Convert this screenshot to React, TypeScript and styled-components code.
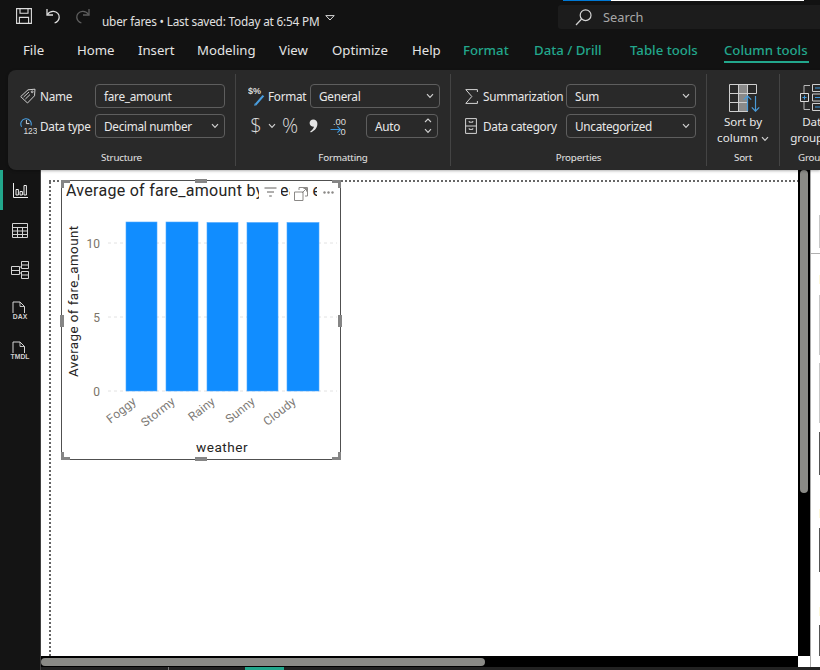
import React from "react";
import styled, { createGlobalStyle } from "styled-components";

const Global = createGlobalStyle`
  html, body { margin: 0; padding: 0; background: #121212; }
  * { box-sizing: border-box; }
  #root { width: 820px; height: 670px; overflow: hidden; }
`;

const UI = `"Noto Sans", "Open Sans", sans-serif`;
const CHART = `"Roboto", "Liberation Sans", sans-serif`;

const Page = styled.div`
  width: 820px; height: 670px; display: flex; flex-direction: column;
  background: #121212; color: #e8e8e8; font-family: ${UI}; overflow: hidden;
`;
const TitleBar = styled.div`height: 35px; display: flex; align-items: flex-start; flex: none;`;
const QuickIcons = styled.div`display: flex; align-items: center; gap: 14px; padding: 8px 0 0 16px; width: 102px;`;
const Mirror = styled.span`transform: scaleX(-1); display: flex;`;
const DocTitle = styled.div`font-size: 11.8px; letter-spacing: -.2px; color: #e0e0e0; margin-top: 12px; white-space: nowrap; line-height: 18px;`;
const TitleCaret = styled.svg`margin: 15px 0 0 6px;`;
const SearchColumn = styled.div`margin-left: auto; width: 262px; display: flex; flex-direction: column;`;
const Progress = styled.div`height: 1px; margin: 0 16px 0 5px; display: flex; background: #fff;`;
const ProgressFill = styled.div`height: 1px; background: #0078d4;`;
const SearchBox = styled.div`
  margin-top: 4px; height: 24px; background: #1c1c1c; border-radius: 3px 0 0 3px;
  display: flex; align-items: center; padding-left: 17px; gap: 11px; color: #a8a8a8; font-size: 12.8px;
`;

const TabBar = styled.div`height: 35px; display: flex; flex: none; padding-left: 23px; font-size: 13.2px;`;
const Tab = styled.div<{ $w: number; $ctx?: boolean; $active?: boolean }>`
  width: ${p => p.$w}px; flex: none; height: 28px; line-height: 30px; white-space: nowrap;
  color: ${p => (p.$ctx ? "#22a78c" : "#e4e4e4")};
  font-weight: ${p => (p.$ctx ? 500 : 400)};
  position: relative;
  ${p => p.$active ? `&::after { content: ""; position: absolute; left: 0; bottom: 0; width: 85px; height: 2px; background: #22a78c; }` : ""}
`;

const Ribbon = styled.div`
  height: 100px; margin-left: 8px; flex: none; background: #292929; border-radius: 8px 0 0 8px;
  display: flex; overflow: hidden; box-shadow: 0 1px 3px rgba(0,0,0,.3); position: relative; z-index: 2;
`;
const Section = styled.div<{ $w: number; $last?: boolean }>`
  width: ${p => p.$w}px; flex: none; margin: 4px 0; padding: 10px 0 1px; 
  border-right: ${p => (p.$last ? "none" : "1px solid #444")};
  display: flex; flex-direction: column; justify-content: space-between;
`;
const SectionBody = styled.div<{ $pad: number }>`padding-left: ${p => p.$pad}px; display: flex; flex-direction: column; gap: 6px;`;
const SectionLabel = styled.div<{ $clip?: boolean }>`
  text-align: ${p => (p.$clip ? "left" : "center")}; padding-left: ${p => (p.$clip ? "18px" : "0")};
  font-size: 9.8px; letter-spacing: -.2px; line-height: 14px; color: #e4e4e4; white-space: nowrap;
`;
const Row = styled.div`display: flex; align-items: center; height: 24px;`;
const FieldIcon = styled.div<{ $w: number }>`width: ${p => p.$w}px; flex: none; display: flex; align-items: center;`;
const FieldLabel = styled.div<{ $w: number }>`width: ${p => p.$w}px; flex: none; font-size: 11.8px; letter-spacing: -.3px; color: #e8e8e8; white-space: nowrap;`;
const Field = styled.div<{ $w?: number }>`
  width: ${p => p.$w ?? 130}px; height: 24px; flex: none; border: 1px solid #5e5e5e; border-radius: 4px;
  font-size: 11.8px; letter-spacing: -.3px; color: #e8e8e8; padding: 0 5px 0 8px; display: flex; align-items: center; justify-content: space-between; white-space: nowrap;
`;
const FormatTools = styled.div`width: 118px; flex: none; height: 24px; display: flex; align-items: center;`;
const Glyph = styled.span<{ $w: number; $ml: number }>`
  width: ${p => p.$w}px; margin-left: ${p => p.$ml}px; text-align: center; flex: none; font-family: "Open Sans", sans-serif;
  font-weight: 300; font-size: 20px; line-height: 24px; color: #dcdcdc;
`;
const ToolSvg = styled.svg<{ $ml: number }>`margin-left: ${p => p.$ml}px; flex: none;`;
const Spin = styled.div`display: flex; flex-direction: column; gap: 5px;`;
const LargeSlot = styled.div<{ $w: number }>`display: flex; flex-direction: column; align-items: center; width: ${p => p.$w}px;`;
const LargeIconBox = styled.div<{ $shift: number }>`height: 28px; margin: 0 0 2px ${p => p.$shift}px;`;
const LargeText = styled.div`font-size: 11.6px; line-height: 16px; color: #e8e8e8; text-align: center; white-space: nowrap;`;

const Workspace = styled.div`flex: 1; display: flex; min-height: 0;`;
const Sidebar = styled.div`width: 41px; flex: none; background: #141414; border-right: 1px solid #3f3f3f; display: flex; flex-direction: column;`;
const SideItem = styled.div<{ $active?: boolean }>`
  height: 40px; display: flex; align-items: center; justify-content: center; color: #e4e4e4;
  border-left: 3px solid ${p => (p.$active ? "#22a78c" : "transparent")}; padding-right: 3px;
`;
const MainColumn = styled.div`flex: 1; display: flex; flex-direction: column; min-width: 0;`;
const CanvasRow = styled.div`flex: 1; display: flex; min-height: 0;`;
const Canvas = styled.div`flex: 1; background: #fff; overflow: hidden; padding: 8px 0 0 8px; min-width: 0;`;
const PageFrame = styled.div`
  width: 1000px; height: 700px; padding: 0 0 0 12px;
  background-image:
    repeating-linear-gradient(90deg, #666 0 2px, transparent 2px 4px),
    repeating-linear-gradient(0deg, #666 0 2px, transparent 2px 4px);
  background-size: 100% 2px, 2px 100%;
  background-repeat: no-repeat;
`;
const Visual = styled.div`width: 280px; height: 280px; margin-top: 2px; position: relative; border: 1px solid #505050; background: #fff;`;
const VisualTitle = styled.div`
  position: absolute; left: 4px; top: 0; width: 251px; overflow: hidden; white-space: nowrap;
  font: 400 16px/20px ${CHART}; color: #252423; letter-spacing: .28px;
`;
const HeaderIcon = styled.div<{ $x: number; $w: number; $top?: number }>`
  position: absolute; left: ${p => p.$x}px; top: ${p => p.$top ?? 1}px; width: ${p => p.$w}px; height: 20px; background: #fff;
  display: flex; align-items: center; justify-content: center;
`;
const Handle = styled.div<{ $x: string; $y: string; $w: number; $h: number }>`
  position: absolute; ${p => p.$x}; ${p => p.$y}; width: ${p => p.$w}px; height: ${p => p.$h}px; background: #858585;
`;
const ChartSvg = styled.svg`display: block;`;

const VScroll = styled.div`width: 12px; flex: none; background: #000; padding: 0 2px 0 2px;`;
const VThumb = styled.div`width: 8px; height: 323px; background: #8a8a86; border-radius: 4px;`;
const RightPanel = styled.div`width: 10px; flex: none; background: #fff; border-left: 1px solid #aaa; display: flex; flex-direction: column; align-items: stretch;`;
const RightRule = styled.div`height: 1px; background: #b0b0b0; margin-top: 5px;`;
const RightMark = styled.div<{ $top: number; $h: number; $c: string }>`
  margin-top: ${p => p.$top}px; height: ${p => p.$h}px; width: 1px; align-self: flex-end; background: ${p => p.$c};
`;
const BottomBar = styled.div`height: 11px; flex: none; display: flex;`;
const HTrack = styled.div`flex: 1; background: #000; padding-top: 2px;`;
const HThumb = styled.div`width: 444px; height: 8px; background: #8a8a86; border-radius: 4px;`;
const Corner = styled.div`width: 12px; background: #fff;`;
const CornerGap = styled.div`width: 10px; background: #fff; border-left: 1px solid #aaa;`;
const PageStrip = styled.div`height: 3px; flex: none; background: #222; display: flex;`;
const StripTick = styled.div`width: 1px; margin-left: 127px; background: #777;`;
const StripTab = styled.div`width: 39px; margin-left: 76px; background: #22a78c;`;

const Chev = ({ c = "#cfcfcf" }: { c?: string }) => (
  <svg width="8" height="6" viewBox="0 0 8 6" fill="none"><path d="M1 1.2 4 4.4 7 1.2" stroke={c} strokeWidth="1.2" /></svg>
);

const Save = () => (
  <svg width="16" height="16" viewBox="0 0 16 16" fill="none" stroke="#dedede" strokeWidth="1.1">
    <path d="M.6.6h14.8v14.8H.6z" /><path d="M4 .6v4.6h8V.6M3.4 15.4V9.4h9.2v6" />
  </svg>
);
const Undo = ({ c }: { c: string }) => (
  <svg width="15" height="16" viewBox="0 0 15 16" fill="none" stroke={c} strokeWidth="1.3">
    <path d="M1 1v6h6" /><path d="M1.2 6.6C3 4 5 3.2 7.6 3.4c3.4.3 6 3 5.6 6.2-.3 2.6-2 4.4-4.6 5.4" />
  </svg>
);
const SearchIcon = () => (
  <svg width="17" height="17" viewBox="0 0 17 17" fill="none" stroke="#d4d4d4" strokeWidth="1.2">
    <circle cx="10.6" cy="6.2" r="5.4" /><path d="M6.6 10 1 16" />
  </svg>
);
const TagIcon = () => (
  <svg width="16" height="16" viewBox="0 0 16 16" fill="none" stroke="#cfcfcf" strokeWidth="1">
    <path d="M.7 8.6 8 1.8l7-.6-.5 6.6-7 7.2z" /><path d="M3.6 9 9 4M5.4 11l4.6-4.4" /><circle cx="12.2" cy="3.8" r=".9" />
  </svg>
);
const TypeIcon = () => (
  <svg width="17" height="18" viewBox="0 0 17 18" fill="none">
    <path d="M11 8.5a5.2 5.2 0 1 0-9.4 1.2" stroke="#4a9fe0" strokeWidth="1.1" /><path d="M6.4 3v3.6h3" stroke="#dcdcdc" strokeWidth="1" />
    <text x="3.4" y="17" fontSize="8.4" fill="#dcdcdc" fontFamily="Liberation Sans, sans-serif">123</text>
  </svg>
);
const FormatIcon = () => (
  <svg width="18" height="22" viewBox="0 0 18 22" fill="none">
    <text x="0" y="8.5" fontSize="9" fontWeight="700" fill="#dcdcdc" fontFamily="Liberation Sans, sans-serif">$%</text>
    <path d="M7.6 19.6 15.4 10.6" stroke="#4a9fe0" strokeWidth="2.2" />
    <path d="M6.6 18.4 6.2 20.8l2.4-.5z" fill="#4a9fe0" />
  </svg>
);
const SigmaIcon = () => (
  <svg width="13" height="15" viewBox="0 0 13 15" fill="none" stroke="#d6d6d6" strokeWidth="1"><path d="M12.4 3V.6H.8l6 6.9-6 6.9h11.6V12" /></svg>
);
const CategoryIcon = () => (
  <svg width="12" height="16" viewBox="0 0 12 16" fill="none" stroke="#d6d6d6" strokeWidth="1">
    <path d="M.6.6h10.8v14.8H.6zM.6 8h10.8M4.2 4.2h3.6M4.2 11.4h3.6" /><path d="M4.2 3v1.2M7.8 3v1.2M4.2 10.2v1.2M7.8 10.2v1.2" />
  </svg>
);
const SortIcon = () => (
  <svg width="32" height="28" viewBox="0 0 32 28" fill="none">
    <path d="M9.5.5h9v27h-9z" fill="#8a8a8a" />
    <path d="M.5.5h27v9H.5zM.5 9.5h18v9H.5zM.5 18.5h18v9H.5zM9.5.5v27M18.5.5v27" stroke="#cfcfcf" strokeWidth="1" />
    <path d="M18.5 27V12M14.8 15.6l3.7-3.8 3.7 3.8M26.5 12v15M22.8 23.4l3.7 3.8 3.7-3.8" stroke="#4a9bd8" strokeWidth="1.2" />
  </svg>
);
const GroupIcon = () => (
  <svg width="40" height="27" viewBox="0 0 40 27" fill="none">
    <path d="M10 1.5H4v24h6" stroke="#b8b8b8" strokeWidth="1" />
    <path d="M.5 9.5h8v8h-8z" stroke="#dcdcdc" strokeWidth="1" fill="#292929" />
    <path d="M2.4 13.5h4.2M4.5 11.4v4.2" stroke="#3f9be0" strokeWidth="1" />
    <path d="M12.5.5h20v7h-20zM12.5 10h20v7h-20zM12.5 19.5h20v7h-20z" stroke="#cfcfcf" strokeWidth="1" />
    <path d="M15 4h9M15 13.5h9M15 23h9" stroke="#3f9be0" strokeWidth="1.2" />
  </svg>
);
const ChartIcon = () => (
  <svg width="15" height="15" viewBox="0 0 15 15" fill="none" stroke="#eee" strokeWidth="1">
    <path d="M.5 0v14.5H15" /><path d="M3 6.5h2.4V12H3zM7 8.5h2.4V12H7zM11 2.5h2.4V12H11z" />
  </svg>
);
const TableIcon = () => (
  <svg width="16" height="15" viewBox="0 0 16 15" fill="none" stroke="#d4d4d4" strokeWidth="1">
    <path d="M.5.5h15v14H.5zM.5 4.5h15M.5 8h15M.5 11.5h15M5.5 4.5v10M10.5 4.5v10" />
  </svg>
);
const ModelIcon = () => (
  <svg width="18" height="18" viewBox="0 0 18 18" fill="none" stroke="#d4d4d4" strokeWidth="1">
    <path d="M.5 5.5h8v8h-8zM.5 9.5h8M10.5.5h7v7h-7zM10.5 4h7M10.5 10.5h7v7h-7zM10.5 14h7M8.5 6h2M8.5 12h2" />
  </svg>
);
const DocLabelIcon = ({ label, w }: { label: string; w: number }) => (
  <svg width={w} height="19" viewBox={`0 0 ${w} 19`} fill="none">
    <path d={`M${w / 2 - 7} 12V1h7l4.5 4.5V12`} stroke="#d4d4d4" strokeWidth="1" />
    <path d={`M${w / 2} 1v4.5h4.5`} stroke="#d4d4d4" strokeWidth=".9" />
    <text x={w / 2} y="17.6" textAnchor="middle" fontSize="6.8" fontWeight="700" fill="#cfcfcf" fontFamily="Liberation Sans, sans-serif">{label}</text>
  </svg>
);

const bars = [
  { x: 64, w: 31, top: 41 }, { x: 104, w: 32, top: 41 }, { x: 145, w: 31, top: 41.5 },
  { x: 185, w: 31, top: 41.5 }, { x: 225, w: 32, top: 41.5 },
];
const cats = [["Foggy", 75], ["Stormy", 114], ["Rainy", 154], ["Sunny", 194], ["Cloudy", 235]] as const;

const Chart = () => (
  <ChartSvg width="278" height="278" viewBox="0 0 278 278">
    {[62, 136, 210].map(y => (
      <line key={y} x1="46" x2="275" y1={y} y2={y} stroke="#e2e2e2" strokeDasharray="3 3" />
    ))}
    {bars.map(b => (
      <rect key={b.x} x={b.x} y={b.top} width={b.w} height={210 - b.top} fill="#118dff" stroke="#4fa9ff" strokeWidth=".6" />
    ))}
    {[["10", 67], ["5", 141], ["0", 215]].map(([t, y]) => (
      <text key={t} x="38" y={y} textAnchor="end" fontSize="12" fill="#7b7468" fontFamily={CHART}>{t}</text>
    ))}
    <text transform="translate(16 196) rotate(-90)" fontSize="13.4" letterSpacing=".42" fill="#252423" fontFamily={CHART}>Average of fare_amount</text>
    {cats.map(([c, x]) => (
      <text key={c} transform={`translate(${x} 222) rotate(-38)`} textAnchor="end" fontSize="12" letterSpacing=".2" fill="#7d7a76" fontFamily={CHART}>{c}</text>
    ))}
    <text x="160" y="271" textAnchor="middle" fontSize="13.6" letterSpacing=".5" fill="#252423" fontFamily={CHART}>weather</text>
  </ChartSvg>
);

export default function App() {
  return (
    <Page>
      <Global />
      <TitleBar>
        <QuickIcons>
          <Save />
          <Undo c="#dedede" />
          <Mirror><Undo c="#5f5f5f" /></Mirror>
        </QuickIcons>
        <DocTitle>uber fares • Last saved: Today at 6:54 PM</DocTitle>
        <TitleCaret width="10" height="6" viewBox="0 0 10 6" fill="none"><path d="M.8.6h8.4L5 5z" stroke="#d8d8d8" /></TitleCaret>
        <SearchColumn>
          <Progress><ProgressFill style={{ width: 48 }} /></Progress>
          <SearchBox><SearchIcon />Search</SearchBox>
        </SearchColumn>
      </TitleBar>

      <TabBar>
        <Tab $w={54}>File</Tab>
        <Tab $w={61}>Home</Tab>
        <Tab $w={59}>Insert</Tab>
        <Tab $w={82}>Modeling</Tab>
        <Tab $w={53}>View</Tab>
        <Tab $w={80}>Optimize</Tab>
        <Tab $w={51}>Help</Tab>
        <Tab $w={71} $ctx>Format</Tab>
        <Tab $w={96} $ctx>Data / Drill</Tab>
        <Tab $w={94} $ctx>Table tools</Tab>
        <Tab $w={90} $ctx $active>Column tools</Tab>
      </TabBar>

      <Ribbon>
        <Section $w={228}>
          <SectionBody $pad={12}>
            <Row>
              <FieldIcon $w={20}><TagIcon /></FieldIcon>
              <FieldLabel $w={55}>Name</FieldLabel>
              <Field>fare_amount</Field>
            </Row>
            <Row>
              <FieldIcon $w={20}><TypeIcon /></FieldIcon>
              <FieldLabel $w={55}>Data type</FieldLabel>
              <Field>Decimal number<Chev /></Field>
            </Row>
          </SectionBody>
          <SectionLabel>Structure</SectionLabel>
        </Section>

        <Section $w={215}>
          <SectionBody $pad={12}>
            <Row>
              <FieldIcon $w={20}><FormatIcon /></FieldIcon>
              <FieldLabel $w={42}>Format</FieldLabel>
              <Field>General<Chev /></Field>
            </Row>
            <Row>
              <FormatTools>
                <Glyph $w={12} $ml={2}>$</Glyph>
                <ToolSvg $ml={6} width="8" height="6" viewBox="0 0 8 6" fill="none"><path d="M1 1.2 4 4.4 7 1.2" stroke="#cfcfcf" strokeWidth="1.2" /></ToolSvg>
                <Glyph $w={18} $ml={5}>%</Glyph>
                <ToolSvg $ml={10} width="9" height="14" viewBox="0 0 9 14" fill="#e4e4e4">
                  <path d="M4.2.4C6.8.4 8.4 2.2 8.4 4.8c0 3.8-2.6 7-6.6 8.6l-.6-1c2-1.2 3.4-2.8 3.8-4.6C2.400 7.800.6 6.200.6 4 .6 1.900 2.200.4 4.200.4z" />
                </ToolSvg>
                <ToolSvg $ml={12} width="17" height="19" viewBox="0 0 17 19" fill="none">
                  <text x="3" y="8" fontSize="9.4" fill="#dcdcdc" fontFamily="Liberation Sans, sans-serif">.00</text>
                  <text x="8" y="18" fontSize="9.4" fill="#dcdcdc" fontFamily="Liberation Sans, sans-serif">.0</text>
                  <path d="M.5 12.5h10M7.4 9.4l3.1 3.1-3.1 3.1" stroke="#3a96de" strokeWidth="1.1" />
                </ToolSvg>
              </FormatTools>
              <Field $w={72}>Auto<Spin><svg width="8" height="5" viewBox="0 0 8 5" fill="none"><path d="M1 4 4 1l3 3" stroke="#cfcfcf" strokeWidth="1.1" /></svg><Chev /></Spin></Field>
            </Row>
          </SectionBody>
          <SectionLabel>Formatting</SectionLabel>
        </Section>

        <Section $w={256}>
          <SectionBody $pad={14}>
            <Row>
              <FieldIcon $w={18}><SigmaIcon /></FieldIcon>
              <FieldLabel $w={83}>Summarization</FieldLabel>
              <Field>Sum<Chev /></Field>
            </Row>
            <Row>
              <FieldIcon $w={18}><CategoryIcon /></FieldIcon>
              <FieldLabel $w={83}>Data category</FieldLabel>
              <Field>Uncategorized<Chev /></Field>
            </Row>
          </SectionBody>
          <SectionLabel>Properties</SectionLabel>
        </Section>

        <Section $w={73}>
          <LargeSlot $w={72}>
            <LargeIconBox $shift={4}><SortIcon /></LargeIconBox>
            <LargeText>Sort by</LargeText>
            <LargeText>column <Chev /></LargeText>
          </LargeSlot>
          <SectionLabel>Sort</SectionLabel>
        </Section>

        <Section $w={60} $last>
          <LargeSlot $w={70}>
            <LargeIconBox $shift={10}><GroupIcon /></LargeIconBox>
            <LargeText>Data</LargeText>
            <LargeText>groups <Chev /></LargeText>
          </LargeSlot>
          <SectionLabel $clip>Groups</SectionLabel>
        </Section>
      </Ribbon>

      <Workspace>
        <Sidebar>
          <SideItem $active><ChartIcon /></SideItem>
          <SideItem><TableIcon /></SideItem>
          <SideItem><ModelIcon /></SideItem>
          <SideItem><DocLabelIcon label="DAX" w={20} /></SideItem>
          <SideItem><DocLabelIcon label="TMDL" w={24} /></SideItem>
        </Sidebar>
        <MainColumn>
          <CanvasRow>
            <Canvas>
              <PageFrame>
                <Visual>
                  <Chart />
                  <VisualTitle>Average of fare_amount by weather</VisualTitle>
                  <HeaderIcon $x={197} $w={22}>
                    <svg width="13" height="10" viewBox="0 0 13 10" fill="none" stroke="#605e5c"><path d="M.5 1h12M3 5h7M5.2 9h2.6" /></svg>
                  </HeaderIcon>
                  <HeaderIcon $x={228} $w={22} $top={3}>
                    <svg width="14" height="14" viewBox="0 0 14 14" fill="none" stroke="#8a8886"><path d="M5 3V.5h8.500v8.500H11M.5 5h8.500v8.500H.5zM8 6l4.500-4.500M9.500 1.500h3v3" /></svg>
                  </HeaderIcon>
                  <HeaderIcon $x={256} $w={20}>
                    <svg width="11" height="3" viewBox="0 0 11 3" fill="#8a8886"><circle cx="1.5" cy="1.5" r="1.2" /><circle cx="5.5" cy="1.5" r="1.2" /><circle cx="9.500" cy="1.5" r="1.2" /></svg>
                  </HeaderIcon>
                  <Handle $x="left:-1px" $y="top:-1px" $w={9} $h={3} />
                  <Handle $x="left:-1px" $y="top:-1px" $w={3} $h={8} />
                  <Handle $x="right:-1px" $y="top:-1px" $w={9} $h={3} />
                  <Handle $x="right:-1px" $y="top:-1px" $w={3} $h={8} />
                  <Handle $x="left:-1px" $y="bottom:-1px" $w={9} $h={3} />
                  <Handle $x="left:-1px" $y="bottom:-1px" $w={3} $h={8} />
                  <Handle $x="right:-1px" $y="bottom:-1px" $w={9} $h={3} />
                  <Handle $x="right:-1px" $y="bottom:-1px" $w={3} $h={8} />
                  <Handle $x="left:133px" $y="top:-2px" $w={12} $h={4} />
                  <Handle $x="left:133px" $y="bottom:-2px" $w={12} $h={4} />
                  <Handle $x="left:-2px" $y="top:134px" $w={4} $h={12} />
                  <Handle $x="right:-2px" $y="top:134px" $w={4} $h={12} />
                </Visual>
              </PageFrame>
            </Canvas>
            <VScroll><VThumb /></VScroll>
            <RightPanel>
              <RightMark $top={45} $h={33} $c="#c8c8c8" />
              <RightRule />
              <RightMark $top={21} $h={9} $c="#fdf8dc" />
              <RightMark $top={11} $h={60} $c="#c8c8c8" />
              <RightMark $top={8} $h={60} $c="#c8c8c8" />
              <RightMark $top={9} $h={43} $c="#555" />
              <RightMark $top={34} $h={9} $c="#fdf8dc" />
              <RightMark $top={10} $h={44} $c="#555" />
              <RightMark $top={35} $h={9} $c="#fdf8dc" />
              <RightMark $top={9} $h={31} $c="#555" />
            </RightPanel>
          </CanvasRow>
          <BottomBar>
            <HTrack><HThumb /></HTrack>
            <Corner />
            <CornerGap />
          </BottomBar>
          <PageStrip>
            <StripTick />
            <StripTab />
          </PageStrip>
        </MainColumn>
      </Workspace>
    </Page>
  );
}
